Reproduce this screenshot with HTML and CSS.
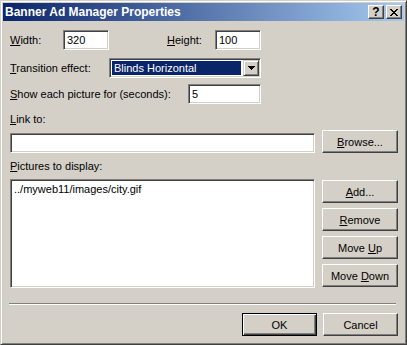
FILE: index.html
```html
<!DOCTYPE html>
<html>
<head>
  <meta charset="UTF-8">
  <title>Banner Ad Manager Properties</title>
  <link rel="stylesheet" href="styles.css">
</head>
<body>
  <div class="window">
    <div class="titlebar">
      <span class="title">Banner Ad Manager Properties</span>
      <div class="title-buttons">
        <div class="cap-btn help">?</div>
        <div class="cap-btn close">
          <svg width="8" height="7" viewBox="0 0 8 7">
            <path d="M0 0h2v1h1v1h2v-1h1v-1h2v1h-1v1h-1v1h-1v1h1v1h1v1h1v1h-2v-1h-1v-1h-2v1h-1v1h-2v-1h1v-1h1v-1h1v-1h-1v-1h-1v-1h-1z" fill="#000"/>
          </svg>
        </div>
      </div>
    </div>

    <div class="content">
      <div class="row">
        <label class="lbl lbl-width"><u>W</u>idth:</label>
        <div class="field small">320</div>
        <label class="lbl lbl-height"><u>H</u>eight:</label>
        <div class="field small">100</div>
      </div>

      <div class="row row-combo">
        <label class="lbl lbl-trans"><u>T</u>ransition effect:</label>
        <div class="combo">
          <div class="combo-sel">Blinds Horizontal</div>
          <div class="combo-btn">
            <svg width="7" height="4" viewBox="0 0 7 4"><path d="M0 0h7v1h-1v1h-1v1h-1v1h-1v-1h-1v-1h-1v-1h-1z" fill="#000"/></svg>
          </div>
        </div>
      </div>

      <div class="row row-show">
        <label class="lbl lbl-show"><u>S</u>how each picture for (seconds):</label>
        <div class="field seconds">5</div>
      </div>

      <div class="caption caption-link"><u>L</u>ink to:</div>
      <div class="link-row">
        <div class="field link"></div>
        <button class="btn side"><u>B</u>rowse...</button>
      </div>

      <div class="caption caption-pics"><u>P</u>ictures to display:</div>
      <div class="pics-row">
        <div class="field list">
          <div class="list-item">../myweb11/images/city.gif</div>
        </div>
        <div class="side-buttons">
          <button class="btn side"><u>A</u>dd...</button>
          <button class="btn side"><u>R</u>emove</button>
          <button class="btn side">Move <u>U</u>p</button>
          <button class="btn side">Move <u>D</u>own</button>
        </div>
      </div>

      <div class="separator"></div>

      <div class="footer">
        <button class="btn default">OK</button>
        <button class="btn">Cancel</button>
      </div>
    </div>
  </div>
</body>
</html>
```

FILE: styles.css
```css
body {
  margin: 0;
  font-family: "Liberation Sans", Arial, sans-serif;
  font-size: 11px;
  color: #000;
  background: #d4d0c8;
}

.window {
  width: 407px;
  height: 345px;
  box-sizing: border-box;
  padding: 2px;
  background: #d4d0c8;
  border: 1px solid;
  border-color: #d4d0c8 #404040 #404040 #d4d0c8;
  box-shadow: inset 1px 1px #fff, inset -1px -1px #808080;
}

.titlebar {
  height: 18px;
  display: flex;
  align-items: center;
  justify-content: space-between;
  padding-left: 2px;
  background: linear-gradient(to right, #0a246a, #a6caf0);
}

.title {
  color: #fff;
  font-weight: bold;
  font-size: 12px;
}

.title-buttons {
  display: flex;
  gap: 2px;
  margin-right: 2px;
}

.cap-btn {
  width: 16px;
  height: 14px;
  box-sizing: border-box;
  display: flex;
  align-items: center;
  justify-content: center;
  background: #d4d0c8;
  border: 1px solid;
  border-color: #fff #404040 #404040 #fff;
  box-shadow: inset -1px -1px #808080;
  font-weight: bold;
  font-size: 12px;
  line-height: 12px;
}

.content {
  padding: 9px 6px 0 7px;
}

.row {
  display: flex;
  align-items: center;
  height: 20px;
}

.row-combo {
  margin-top: 8px;
}

.row-show {
  margin-top: 6px;
}

.lbl-width { width: 53px; }
.lbl-height { width: 48px; margin-left: 58px; }
.lbl-trans { width: 99px; }
.lbl-show { width: 178px; }

.field {
  box-sizing: border-box;
  height: 20px;
  background: #fff;
  border: 1px solid;
  border-color: #808080 #fff #fff #808080;
  box-shadow: inset 1px 1px #404040, inset -1px -1px #d4d0c8;
  padding: 2px 3px 0;
  line-height: 15px;
  white-space: nowrap;
}

.small { width: 46px; }
.seconds { width: 73px; }
.link { width: 305px; }

.combo {
  box-sizing: border-box;
  width: 152px;
  height: 20px;
  display: flex;
  border: 1px solid;
  border-color: #808080 #fff #fff #808080;
  box-shadow: inset 1px 1px #404040, inset -1px -1px #d4d0c8;
  background: #fff;
  padding: 1px;
}

.combo-sel {
  flex: 1;
  margin: 1px 2px 1px 1px;
  background: #0a246a;
  color: #fff;
  padding-left: 2px;
  line-height: 14px;
}

.combo-btn {
  width: 16px;
  height: 16px;
  box-sizing: border-box;
  display: flex;
  align-items: center;
  justify-content: center;
  background: #d4d0c8;
  border: 1px solid;
  border-color: #d4d0c8 #404040 #404040 #d4d0c8;
  box-shadow: inset 1px 1px #fff, inset -1px -1px #808080;
}

.caption {
  height: 13px;
  line-height: 13px;
}

.caption-link { margin-top: 9px; }
.caption-pics { margin-top: 7px; }

.link-row {
  display: flex;
  align-items: flex-end;
  gap: 7px;
  margin-top: 4px;
}

.btn {
  box-sizing: border-box;
  width: 75px;
  height: 23px;
  padding: 0;
  font-family: inherit;
  font-size: 11px;
  color: #000;
  background: #d4d0c8;
  border: 1px solid;
  border-color: #fff #404040 #404040 #fff;
  box-shadow: inset -1px -1px #808080;
  border-radius: 0;
}

.btn.side { width: 76px; }

.btn.default {
  border: 1px solid #000;
  box-shadow: inset 1px 1px #fff, inset -1px -1px #404040, inset -2px -2px #808080;
}

.pics-row {
  display: flex;
  gap: 7px;
  margin-top: 6px;
}

.list {
  width: 305px;
  height: 109px;
  padding: 2px 3px;
}

.side-buttons {
  display: flex;
  flex-direction: column;
  gap: 5px;
  margin-top: 1px;
}

.separator {
  width: 387px;
  margin: 15px 0 0 -1px;
  border-top: 1px solid #808080;
  border-bottom: 1px solid #fff;
}

.footer {
  display: flex;
  justify-content: flex-end;
  gap: 6px;
  margin-top: 8px;
}
```
